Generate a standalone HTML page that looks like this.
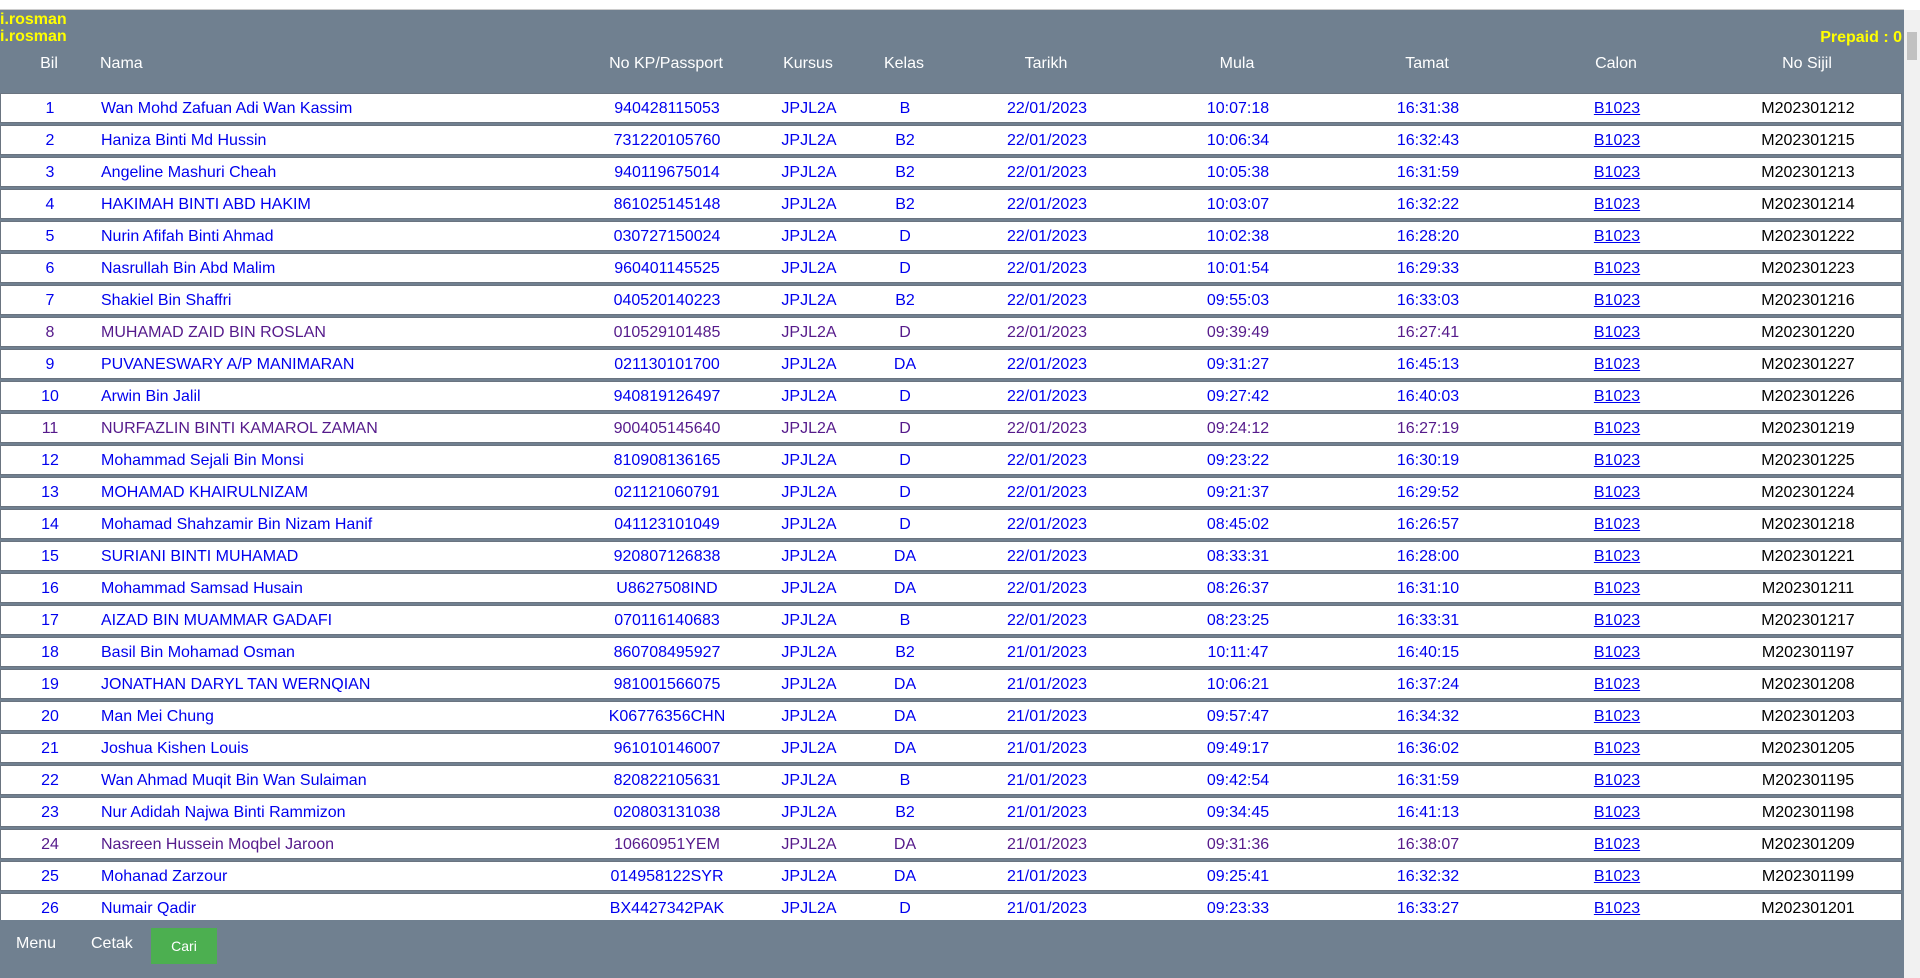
<!DOCTYPE html>
<html><head><meta charset="utf-8"><style>
*{margin:0;padding:0;box-sizing:border-box}
body{width:1920px;height:978px;overflow:hidden;background:#fff;font-family:"Liberation Sans",Arial,sans-serif;position:relative}
#top{position:absolute;left:0;top:0;width:1904px;height:10px;background:#fff;border-bottom:1px solid #ccc}
#bg{position:absolute;left:0;top:10px;width:1904px;height:968px;background:#708090}
.u{position:absolute;left:0;color:#ff0;font-weight:bold;font-size:16px}
#pp{position:absolute;right:18px;top:29px;color:#ff0;font-weight:bold;font-size:16px}
.h{position:absolute;top:55px;color:#fff;font-size:16px;transform:translateX(-50%);white-space:nowrap}
.r{position:absolute;left:0;width:1902px;height:30px;background:#fff;border:1px solid #6a7480;font-size:16px;color:#0000ee}
.r span{position:absolute;top:6px;transform:translateX(-50%);white-space:nowrap}
.r span.n{transform:none;left:100px}
.r .c1{left:49px}.r .c3{left:666px}.r .c4{left:808px}.r .c5{left:904px}.r .c6{left:1046px}.r .c7{left:1237px}.r .c8{left:1427px}.r .c9{left:1616px;text-decoration:underline}.r .c10{left:1807px;color:#000}
.v{color:#551a8b}.v .c9{color:#0000ee}
#foot{position:absolute;left:0;top:920px;width:1904px;height:58px;background:#708090}
#foot .t{position:absolute;top:15px;color:#fff;font-size:16px}
#cari{position:absolute;left:151px;top:8px;width:66px;height:36px;background:#4caf50;color:#fff;font-size:14px;text-align:center;line-height:36px}
#sb{position:absolute;right:0;top:10px;width:16px;height:968px;background:#f1f1f1}
#sb div{position:absolute;left:3px;top:22px;width:10px;height:28px;background:#c1c1c1}
</style></head><body>
<div id="top"></div><div id="bg"></div>
<div class="u" style="top:11px">i.rosman</div>
<div class="u" style="top:28px">i.rosman</div>
<div id="pp">Prepaid : 0</div>
<div class="h" style="left:49px">Bil</div>
<div class="h" style="left:100px;transform:none">Nama</div>
<div class="h" style="left:666px">No KP/Passport</div>
<div class="h" style="left:808px">Kursus</div>
<div class="h" style="left:904px">Kelas</div>
<div class="h" style="left:1046px">Tarikh</div>
<div class="h" style="left:1237px">Mula</div>
<div class="h" style="left:1427px">Tamat</div>
<div class="h" style="left:1616px">Calon</div>
<div class="h" style="left:1807px">No Sijil</div>

<div class="r" style="top:93px"><span class="c1">1</span><span class="n">Wan Mohd Zafuan Adi Wan Kassim</span><span class="c3">940428115053</span><span class="c4">JPJL2A</span><span class="c5">B</span><span class="c6">22/01/2023</span><span class="c7">10:07:18</span><span class="c8">16:31:38</span><span class="c9">B1023</span><span class="c10">M202301212</span></div>
<div class="r" style="top:125px"><span class="c1">2</span><span class="n">Haniza Binti Md Hussin</span><span class="c3">731220105760</span><span class="c4">JPJL2A</span><span class="c5">B2</span><span class="c6">22/01/2023</span><span class="c7">10:06:34</span><span class="c8">16:32:43</span><span class="c9">B1023</span><span class="c10">M202301215</span></div>
<div class="r" style="top:157px"><span class="c1">3</span><span class="n">Angeline Mashuri Cheah</span><span class="c3">940119675014</span><span class="c4">JPJL2A</span><span class="c5">B2</span><span class="c6">22/01/2023</span><span class="c7">10:05:38</span><span class="c8">16:31:59</span><span class="c9">B1023</span><span class="c10">M202301213</span></div>
<div class="r" style="top:189px"><span class="c1">4</span><span class="n">HAKIMAH BINTI ABD HAKIM</span><span class="c3">861025145148</span><span class="c4">JPJL2A</span><span class="c5">B2</span><span class="c6">22/01/2023</span><span class="c7">10:03:07</span><span class="c8">16:32:22</span><span class="c9">B1023</span><span class="c10">M202301214</span></div>
<div class="r" style="top:221px"><span class="c1">5</span><span class="n">Nurin Afifah Binti Ahmad</span><span class="c3">030727150024</span><span class="c4">JPJL2A</span><span class="c5">D</span><span class="c6">22/01/2023</span><span class="c7">10:02:38</span><span class="c8">16:28:20</span><span class="c9">B1023</span><span class="c10">M202301222</span></div>
<div class="r" style="top:253px"><span class="c1">6</span><span class="n">Nasrullah Bin Abd Malim</span><span class="c3">960401145525</span><span class="c4">JPJL2A</span><span class="c5">D</span><span class="c6">22/01/2023</span><span class="c7">10:01:54</span><span class="c8">16:29:33</span><span class="c9">B1023</span><span class="c10">M202301223</span></div>
<div class="r" style="top:285px"><span class="c1">7</span><span class="n">Shakiel Bin Shaffri</span><span class="c3">040520140223</span><span class="c4">JPJL2A</span><span class="c5">B2</span><span class="c6">22/01/2023</span><span class="c7">09:55:03</span><span class="c8">16:33:03</span><span class="c9">B1023</span><span class="c10">M202301216</span></div>
<div class="r v" style="top:317px"><span class="c1">8</span><span class="n">MUHAMAD ZAID BIN ROSLAN</span><span class="c3">010529101485</span><span class="c4">JPJL2A</span><span class="c5">D</span><span class="c6">22/01/2023</span><span class="c7">09:39:49</span><span class="c8">16:27:41</span><span class="c9">B1023</span><span class="c10">M202301220</span></div>
<div class="r" style="top:349px"><span class="c1">9</span><span class="n">PUVANESWARY A/P MANIMARAN</span><span class="c3">021130101700</span><span class="c4">JPJL2A</span><span class="c5">DA</span><span class="c6">22/01/2023</span><span class="c7">09:31:27</span><span class="c8">16:45:13</span><span class="c9">B1023</span><span class="c10">M202301227</span></div>
<div class="r" style="top:381px"><span class="c1">10</span><span class="n">Arwin Bin Jalil</span><span class="c3">940819126497</span><span class="c4">JPJL2A</span><span class="c5">D</span><span class="c6">22/01/2023</span><span class="c7">09:27:42</span><span class="c8">16:40:03</span><span class="c9">B1023</span><span class="c10">M202301226</span></div>
<div class="r v" style="top:413px"><span class="c1">11</span><span class="n">NURFAZLIN BINTI KAMAROL ZAMAN</span><span class="c3">900405145640</span><span class="c4">JPJL2A</span><span class="c5">D</span><span class="c6">22/01/2023</span><span class="c7">09:24:12</span><span class="c8">16:27:19</span><span class="c9">B1023</span><span class="c10">M202301219</span></div>
<div class="r" style="top:445px"><span class="c1">12</span><span class="n">Mohammad Sejali Bin Monsi</span><span class="c3">810908136165</span><span class="c4">JPJL2A</span><span class="c5">D</span><span class="c6">22/01/2023</span><span class="c7">09:23:22</span><span class="c8">16:30:19</span><span class="c9">B1023</span><span class="c10">M202301225</span></div>
<div class="r" style="top:477px"><span class="c1">13</span><span class="n">MOHAMAD KHAIRULNIZAM</span><span class="c3">021121060791</span><span class="c4">JPJL2A</span><span class="c5">D</span><span class="c6">22/01/2023</span><span class="c7">09:21:37</span><span class="c8">16:29:52</span><span class="c9">B1023</span><span class="c10">M202301224</span></div>
<div class="r" style="top:509px"><span class="c1">14</span><span class="n">Mohamad Shahzamir Bin Nizam Hanif</span><span class="c3">041123101049</span><span class="c4">JPJL2A</span><span class="c5">D</span><span class="c6">22/01/2023</span><span class="c7">08:45:02</span><span class="c8">16:26:57</span><span class="c9">B1023</span><span class="c10">M202301218</span></div>
<div class="r" style="top:541px"><span class="c1">15</span><span class="n">SURIANI BINTI MUHAMAD</span><span class="c3">920807126838</span><span class="c4">JPJL2A</span><span class="c5">DA</span><span class="c6">22/01/2023</span><span class="c7">08:33:31</span><span class="c8">16:28:00</span><span class="c9">B1023</span><span class="c10">M202301221</span></div>
<div class="r" style="top:573px"><span class="c1">16</span><span class="n">Mohammad Samsad Husain</span><span class="c3">U8627508IND</span><span class="c4">JPJL2A</span><span class="c5">DA</span><span class="c6">22/01/2023</span><span class="c7">08:26:37</span><span class="c8">16:31:10</span><span class="c9">B1023</span><span class="c10">M202301211</span></div>
<div class="r" style="top:605px"><span class="c1">17</span><span class="n">AIZAD BIN MUAMMAR GADAFI</span><span class="c3">070116140683</span><span class="c4">JPJL2A</span><span class="c5">B</span><span class="c6">22/01/2023</span><span class="c7">08:23:25</span><span class="c8">16:33:31</span><span class="c9">B1023</span><span class="c10">M202301217</span></div>
<div class="r" style="top:637px"><span class="c1">18</span><span class="n">Basil Bin Mohamad Osman</span><span class="c3">860708495927</span><span class="c4">JPJL2A</span><span class="c5">B2</span><span class="c6">21/01/2023</span><span class="c7">10:11:47</span><span class="c8">16:40:15</span><span class="c9">B1023</span><span class="c10">M202301197</span></div>
<div class="r" style="top:669px"><span class="c1">19</span><span class="n">JONATHAN DARYL TAN WERNQIAN</span><span class="c3">981001566075</span><span class="c4">JPJL2A</span><span class="c5">DA</span><span class="c6">21/01/2023</span><span class="c7">10:06:21</span><span class="c8">16:37:24</span><span class="c9">B1023</span><span class="c10">M202301208</span></div>
<div class="r" style="top:701px"><span class="c1">20</span><span class="n">Man Mei Chung</span><span class="c3">K06776356CHN</span><span class="c4">JPJL2A</span><span class="c5">DA</span><span class="c6">21/01/2023</span><span class="c7">09:57:47</span><span class="c8">16:34:32</span><span class="c9">B1023</span><span class="c10">M202301203</span></div>
<div class="r" style="top:733px"><span class="c1">21</span><span class="n">Joshua Kishen Louis</span><span class="c3">961010146007</span><span class="c4">JPJL2A</span><span class="c5">DA</span><span class="c6">21/01/2023</span><span class="c7">09:49:17</span><span class="c8">16:36:02</span><span class="c9">B1023</span><span class="c10">M202301205</span></div>
<div class="r" style="top:765px"><span class="c1">22</span><span class="n">Wan Ahmad Muqit Bin Wan Sulaiman</span><span class="c3">820822105631</span><span class="c4">JPJL2A</span><span class="c5">B</span><span class="c6">21/01/2023</span><span class="c7">09:42:54</span><span class="c8">16:31:59</span><span class="c9">B1023</span><span class="c10">M202301195</span></div>
<div class="r" style="top:797px"><span class="c1">23</span><span class="n">Nur Adidah Najwa Binti Rammizon</span><span class="c3">020803131038</span><span class="c4">JPJL2A</span><span class="c5">B2</span><span class="c6">21/01/2023</span><span class="c7">09:34:45</span><span class="c8">16:41:13</span><span class="c9">B1023</span><span class="c10">M202301198</span></div>
<div class="r v" style="top:829px"><span class="c1">24</span><span class="n">Nasreen Hussein Moqbel Jaroon</span><span class="c3">10660951YEM</span><span class="c4">JPJL2A</span><span class="c5">DA</span><span class="c6">21/01/2023</span><span class="c7">09:31:36</span><span class="c8">16:38:07</span><span class="c9">B1023</span><span class="c10">M202301209</span></div>
<div class="r" style="top:861px"><span class="c1">25</span><span class="n">Mohanad Zarzour</span><span class="c3">014958122SYR</span><span class="c4">JPJL2A</span><span class="c5">DA</span><span class="c6">21/01/2023</span><span class="c7">09:25:41</span><span class="c8">16:32:32</span><span class="c9">B1023</span><span class="c10">M202301199</span></div>
<div class="r" style="top:893px"><span class="c1">26</span><span class="n">Numair Qadir</span><span class="c3">BX4427342PAK</span><span class="c4">JPJL2A</span><span class="c5">D</span><span class="c6">21/01/2023</span><span class="c7">09:23:33</span><span class="c8">16:33:27</span><span class="c9">B1023</span><span class="c10">M202301201</span></div>

<div id="foot"><span class="t" style="left:16px">Menu</span><span class="t" style="left:91px">Cetak</span><div id="cari">Cari</div></div>
<div id="sb"><div></div></div>
</body></html>
